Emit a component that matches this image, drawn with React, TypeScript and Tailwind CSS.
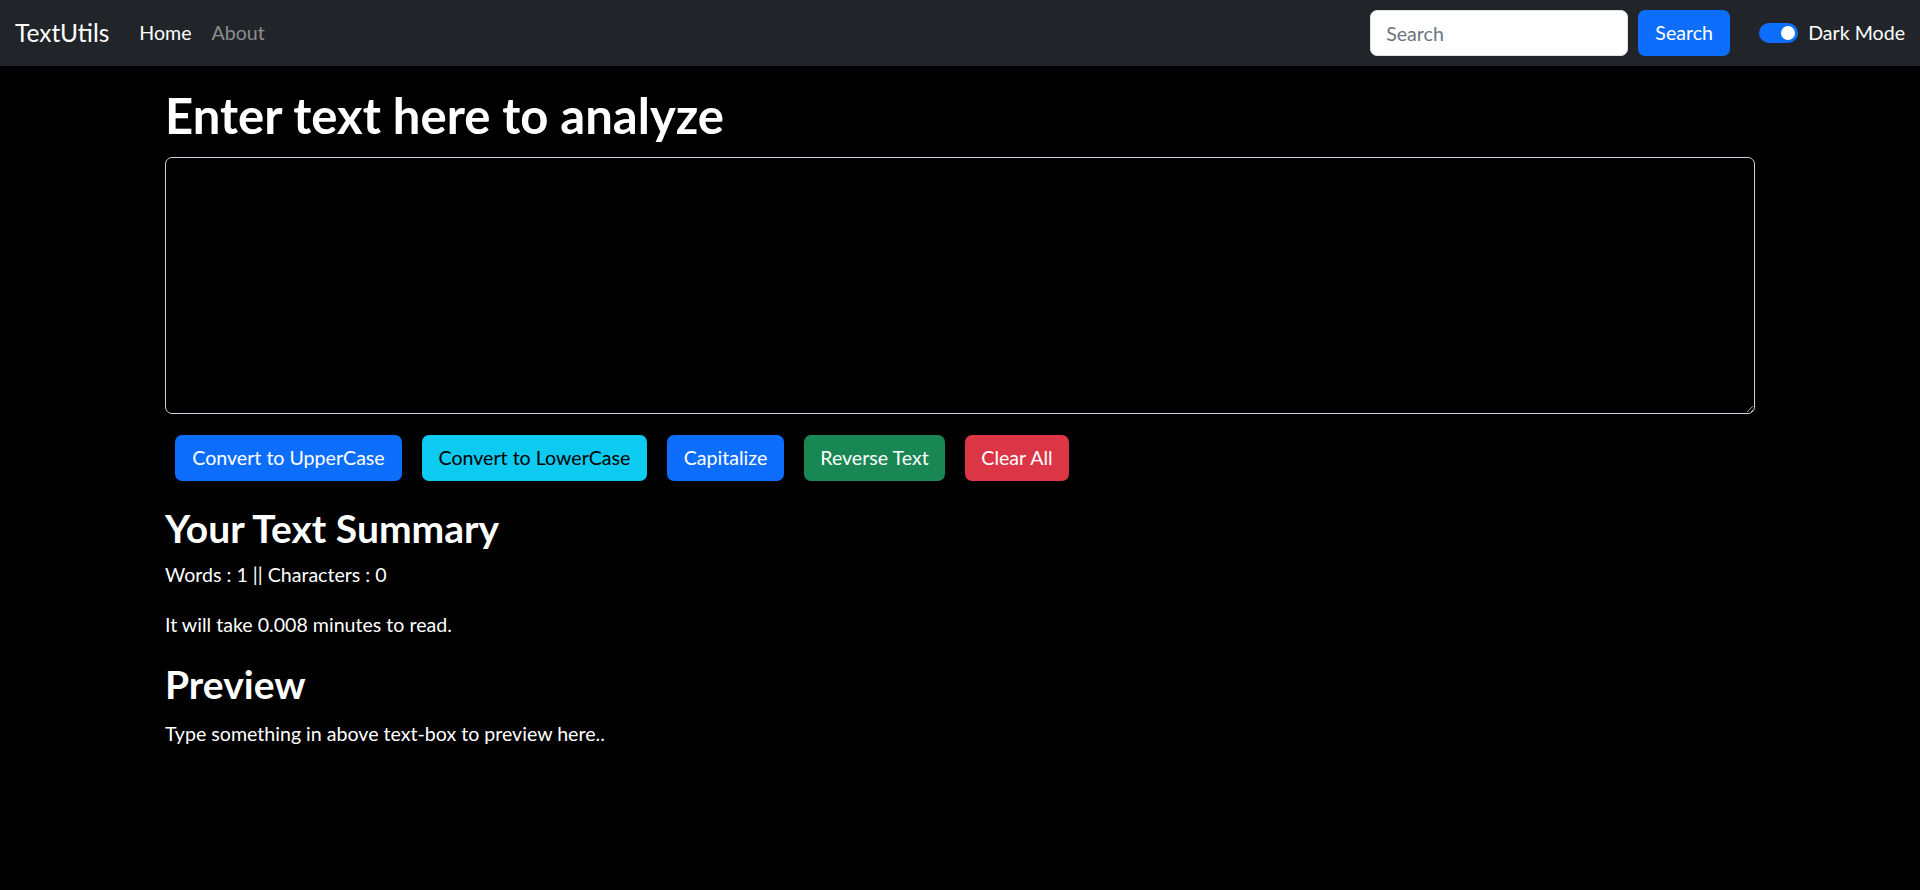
import { useState } from "react";

const font = { fontFamily: "Lato, 'Open Sans', sans-serif" };

function Navbar() {
  return (
    <nav className="flex h-[66px] items-center bg-[#212529] pl-[15px] pr-[15px]">
      <span className="mr-[20px] text-[24.5px] leading-none text-white">TextUtils</span>
      <a className="px-[10px] text-[19.6px] text-white">Home</a>
      <a className="px-[10px] text-[19.6px] text-[#8c8e90]">About</a>
      <div className="ml-auto flex items-center">
        <input
          placeholder="Search"
          className="h-[46px] w-[258px] rounded-[7px] border border-[#dee2e6] bg-white px-[15px] text-[19.6px] text-[#212529] outline-none placeholder:text-[#6c757d]"
        />
        <button className="ml-[10px] h-[46px] w-[92px] rounded-[7px] bg-[#0d6efd] text-[19.6px] text-white">
          Search
        </button>
        <div className="ml-[29px] flex items-center">
          <div className="flex h-[20px] w-[39px] items-center justify-end rounded-full bg-[#0d6efd] pr-[3px]">
            <div className="h-[14px] w-[14px] rounded-full bg-white" />
          </div>
          <span className="ml-[10px] text-[19.6px] text-white">Dark Mode</span>
        </div>
      </div>
    </nav>
  );
}

const buttons = [
  { label: "Convert to UpperCase", cls: "w-[227px] bg-[#0d6efd] text-white" },
  { label: "Convert to LowerCase", cls: "w-[225px] bg-[#0dcaf0] text-black" },
  { label: "Capitalize", cls: "w-[117px] bg-[#0d6efd] text-white" },
  { label: "Reverse Text", cls: "w-[141px] bg-[#198754] text-white" },
  { label: "Clear All", cls: "w-[104px] bg-[#dc3545] text-white" },
];

export default function App() {
  const [text, setText] = useState("");
  return (
    <div className="min-h-[890px] bg-black text-white" style={font}>
      <Navbar />
      <div className="mx-auto w-[1590px]">
        <h1 className="mt-[20px] text-[49px] font-bold leading-[59px]">Enter text here to analyze</h1>
        <textarea
          value={text}
          onChange={(e) => setText(e.target.value)}
          className="mt-[12px] block h-[257px] w-full rounded-[7px] border border-[#ced4da] bg-black p-[10px] text-[19.6px] text-white outline-none"
        />
        <div className="mt-[21px] flex gap-[20px] pl-[10px]">
          {buttons.map((b) => (
            <button
              key={b.label}
              className={`h-[46px] rounded-[7px] text-center text-[19.6px] ${b.cls}`}
            >
              {b.label}
            </button>
          ))}
        </div>
        <h2 className="mt-[24px] text-[39px] font-bold leading-[47px]">Your Text Summary</h2>
        <p className="mt-[8px] text-[19.6px] leading-[29px]">Words : 1 || Characters : 0</p>
        <p className="mt-[21px] text-[19.6px] leading-[29px]">It will take 0.008 minutes to read.</p>
        <h2 className="mt-[22px] text-[39px] font-bold leading-[47px]">Preview</h2>
        <p className="mt-[11px] text-[19.6px] leading-[29px]">Type something in above text-box to preview here..</p>
      </div>
    </div>
  );
}
